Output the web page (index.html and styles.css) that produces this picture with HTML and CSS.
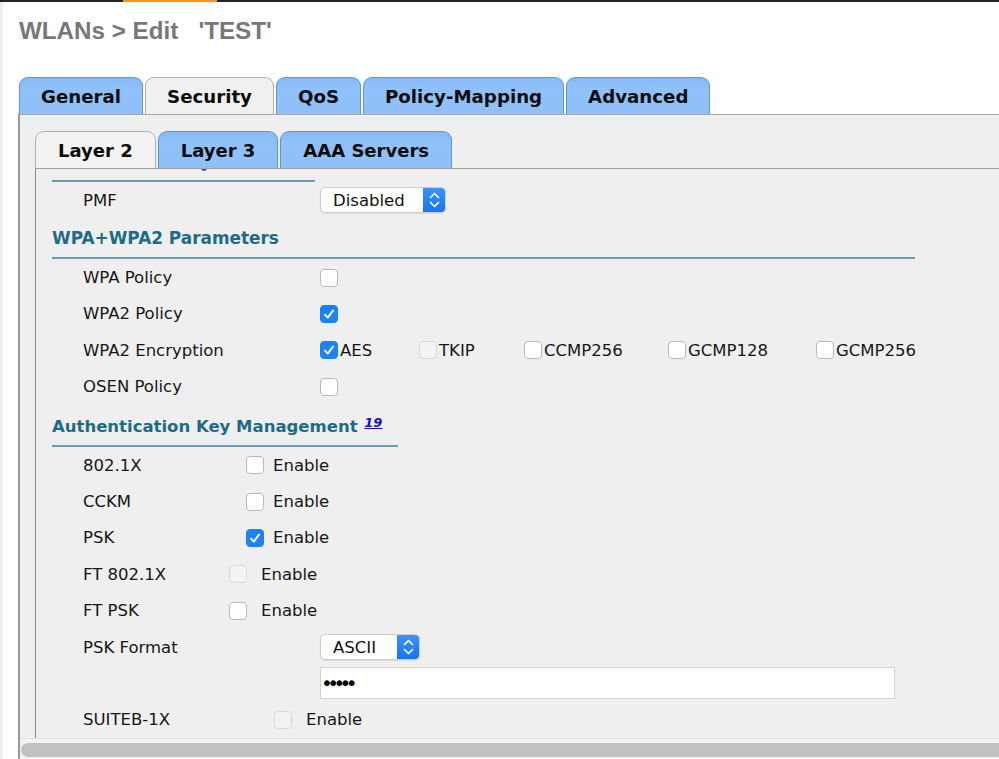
FILE: index.html
```html
<!DOCTYPE html>
<html lang="en">
<head>
<meta charset="utf-8">
<title>WLANs &gt; Edit 'TEST'</title>
<link rel="stylesheet" href="styles.css">
</head>
<body>
<div class="topbar"><div class="topbar-accent"></div></div>
<div class="page">
  <div class="gutter"></div>
  <div class="main">
    <h1 class="title">WLANs &gt; Edit&nbsp;&nbsp; 'TEST'</h1>
    <nav class="tabs maintabs">
      <div class="tab">General</div>
      <div class="tab tab-active">Security</div>
      <div class="tab">QoS</div>
      <div class="tab">Policy-Mapping</div>
      <div class="tab">Advanced</div>
    </nav>
    <div class="panel">
      <nav class="tabs subtabs">
        <div class="tab tab-active">Layer 2</div>
        <div class="tab">Layer 3</div>
        <div class="tab">AAA Servers</div>
      </nav>
      <div class="subpanel">
        <div class="scroller">
          <div class="section-head sh-pmf"><span class="descender"></span></div>
          <div class="row">
            <span class="label">PMF</span>
            <div class="select sel-pmf"><span class="select-text">Disabled</span><span class="select-btn"><svg width="23" height="26" viewBox="0 0 23 26"><path d="M7.5 10.5 L11.5 6.5 L15.5 10.5 M7.5 15.5 L11.5 19.5 L15.5 15.5" fill="none" stroke="#fff" stroke-width="1.7" stroke-linecap="round" stroke-linejoin="round"/></svg></span></div>
          </div>

          <div class="section-head sh-wpa">WPA+WPA2 Parameters</div>
          <div class="row">
            <span class="label">WPA Policy</span>
            <span class="cb"></span>
          </div>
          <div class="row">
            <span class="label">WPA2 Policy</span>
            <span class="cb cb-on"><svg width="18" height="18" viewBox="0 0 18 18"><path d="M5 9.6 L7.8 12.6 L13 5.6" fill="none" stroke="#fff" stroke-width="1.9" stroke-linecap="round" stroke-linejoin="round"/></svg></span>
          </div>
          <div class="row">
            <span class="label">WPA2 Encryption</span>
            <div class="enc">
              <span class="opt"><span class="cb cb-on"><svg width="18" height="18" viewBox="0 0 18 18"><path d="M5 9.6 L7.8 12.6 L13 5.6" fill="none" stroke="#fff" stroke-width="1.9" stroke-linecap="round" stroke-linejoin="round"/></svg></span>AES</span>
              <span class="opt"><span class="cb cb-off"></span>TKIP</span>
              <span class="opt"><span class="cb"></span>CCMP256</span>
              <span class="opt"><span class="cb"></span>GCMP128</span>
              <span class="opt"><span class="cb"></span>GCMP256</span>
            </div>
          </div>
          <div class="row">
            <span class="label">OSEN Policy</span>
            <span class="cb"></span>
          </div>

          <div class="section-head sh-akm">Authentication Key Management <sup class="fn">19</sup></div>
          <div class="row">
            <span class="label label-akm">802.1X</span>
            <span class="cb"></span><span class="enable">Enable</span>
          </div>
          <div class="row">
            <span class="label label-akm">CCKM</span>
            <span class="cb"></span><span class="enable">Enable</span>
          </div>
          <div class="row">
            <span class="label label-akm">PSK</span>
            <span class="cb cb-on"><svg width="18" height="18" viewBox="0 0 18 18"><path d="M5 9.6 L7.8 12.6 L13 5.6" fill="none" stroke="#fff" stroke-width="1.9" stroke-linecap="round" stroke-linejoin="round"/></svg></span><span class="enable">Enable</span>
          </div>
          <div class="row">
            <span class="label label-ft">FT 802.1X</span>
            <span class="cb cb-off"></span><span class="enable enable-wide">Enable</span>
          </div>
          <div class="row">
            <span class="label label-ft">FT PSK</span>
            <span class="cb"></span><span class="enable enable-wide">Enable</span>
          </div>
          <div class="row">
            <span class="label">PSK Format</span>
            <div class="select sel-ascii"><span class="select-text">ASCII</span><span class="select-btn"><svg width="23" height="26" viewBox="0 0 23 26"><path d="M7.5 10.5 L11.5 6.5 L15.5 10.5 M7.5 15.5 L11.5 19.5 L15.5 15.5" fill="none" stroke="#fff" stroke-width="1.7" stroke-linecap="round" stroke-linejoin="round"/></svg></span></div>
          </div>
          <div class="row">
            <span class="label"></span>
            <input class="pw" type="password" value="12345" readonly>
          </div>
          <div class="row">
            <span class="label label-suite">SUITEB-1X</span>
            <span class="cb cb-off"></span><span class="enable enable-wide">Enable</span>
          </div>
        </div>
      </div>
      <div class="hscroll"><div class="thumb"></div></div>
    </div>
  </div>
</div>
</body>
</html>
```

FILE: styles.css
```css
html, body {
  margin: 0;
  padding: 0;
  height: 100%;
  overflow: hidden;
  background: #ffffff;
}

body {
  font-family: "DejaVu Sans", Verdana, sans-serif;
  color: #161616;
}

.topbar {
  height: 2px;
  background: #222222;
  display: flex;
}

.topbar-accent {
  margin-left: 123px;
  width: 94px;
  background: #f7941d;
}

.page {
  display: flex;
  height: calc(100vh - 2px);
}

.gutter {
  width: 3px;
  background: #efefef;
  flex: none;
}

.main {
  flex: 1;
  min-width: 0;
  padding-left: 15px;
  display: flex;
  flex-direction: column;
}

.title {
  margin: 15px 0 32px 1px;
  height: 28px;
  line-height: 28px;
  font-family: "Liberation Sans", Arial, sans-serif;
  font-weight: bold;
  font-size: 24.2px;
  color: #777777;
  white-space: nowrap;
}

.tabs {
  display: flex;
  gap: 2px;
  height: 37px;
  flex: none;
}

.maintabs {
  margin-left: 1px;
}

.tab {
  box-sizing: border-box;
  height: 37px;
  padding: 0 21px;
  display: flex;
  align-items: center;
  border: 1px solid #5e96d6;
  border-bottom: none;
  border-radius: 9px 9px 0 0;
  background: linear-gradient(#86b9f6, #90c1fa 30%, #8fc0f9);
  font-weight: bold;
  font-size: 18.2px;
  color: #0c0c0c;
  white-space: nowrap;
}

.tab-active {
  background: #f0f0f0;
  border-color: #b0b0b0;
}

.panel {
  flex: 1;
  min-height: 0;
  display: flex;
  flex-direction: column;
  background: #efefef;
  border-top: 1px solid #a9a9a9;
  border-left: 2px solid #999999;
  padding-top: 16px;
}

.subtabs {
  margin-left: 15px;
}

.subtabs .tab {
  padding: 0 22px;
  font-size: 18px;
}

.subtabs .tab-active {
  background: #f3f3f3;
}

.subpanel {
  flex: 1;
  min-height: 0;
  overflow: hidden;
  margin-left: 15px;
  border-top: 1px solid #a3a3a3;
  border-left: 1px solid #8a8a8a;
  background: #efefef;
}

.scroller {
  margin-top: -28px;
}

.section-head {
  box-sizing: border-box;
  margin-left: 16px;
  line-height: 20px;
  font-weight: bold;
  font-size: 16.5px;
  color: #1d6b88;
  border-bottom: 2px solid #6b9db2;
  white-space: nowrap;
}

.sh-pmf {
  width: 263px;
  height: 41px;
  padding: 0;
  display: flex;
  align-items: flex-end;
}

.descender {
  width: 6px;
  height: 3px;
  margin: 0 0 9px 149px;
  border-radius: 0 0 3px 3px;
  background: #1d6b88;
}

.sh-wpa {
  width: 863px;
  padding: 10px 0 9px;
  font-size: 16.9px;
}

.sh-akm {
  width: 346px;
  padding: 12px 0 8px;
}

.fn {
  font-size: 13px;
  font-style: italic;
  font-weight: bold;
  color: #1a0dcc;
  text-decoration: underline;
  vertical-align: 5px;
  line-height: 0;
  margin-left: 1px;
}

.row {
  display: flex;
  align-items: center;
  height: 36.4px;
  padding-left: 47px;
  font-size: 16.5px;
  white-space: nowrap;
}

.label {
  width: 237px;
  flex: none;
}

.label-akm {
  width: 163px;
}

.label-ft {
  width: 146px;
}

.label-suite {
  width: 191px;
}

.enable {
  margin-left: 9px;
}

.enable-wide {
  margin-left: 14px;
}

.cb {
  box-sizing: border-box;
  width: 18px;
  height: 18px;
  flex: none;
  display: inline-flex;
  border: 1px solid #b9b9b9;
  border-radius: 4px;
  background: #ffffff;
}

.cb svg {
  display: block;
  margin: -1px;
}

.cb-on {
  border-color: #1b7ef6;
  background: #1d82f8;
}

.cb-off {
  border-color: #dadada;
  background: #f3f3f3;
}

.enc {
  display: grid;
  grid-template-columns: 99px 105px 144px 148px auto;
}

.opt {
  display: flex;
  align-items: center;
  gap: 2px;
}

.select {
  box-sizing: border-box;
  height: 26px;
  display: flex;
  align-items: stretch;
  border: 1px solid #cdcdcd;
  border-radius: 5px;
  background: #ffffff;
  box-shadow: 0 1px 1px rgba(0, 0, 0, 0.08);
  overflow: hidden;
}

.sel-pmf {
  width: 126px;
}

.sel-ascii {
  width: 100px;
}

.select-text {
  flex: 1;
  padding-left: 12px;
  line-height: 25px;
  color: #111111;
}

.select-btn {
  width: 23px;
  margin: -1px -1px -1px 0;
  background: linear-gradient(#3b95fb, #1672f3);
  border-radius: 0 5px 5px 0;
}

.select-btn svg {
  display: block;
}

.pw {
  box-sizing: border-box;
  width: 575px;
  height: 32px;
  margin: 0;
  padding: 0 0 0 0;
  border: 1px solid #d2d2d2;
  background: #ffffff;
  font-family: "DejaVu Sans", sans-serif;
  font-size: 20px;
  letter-spacing: -5.6px;
  color: #000000;
  outline: none;
}

.hscroll {
  flex: none;
  height: 21px;
  box-sizing: border-box;
  padding: 4px 0 3px 1px;
  background: #f3f3f3;
  border-top: 1px solid #e4e4e4;
  overflow: hidden;
}

.thumb {
  height: 14px;
  margin-right: -10px;
  border-radius: 7px;
  background: #c1c1c1;
}
```
